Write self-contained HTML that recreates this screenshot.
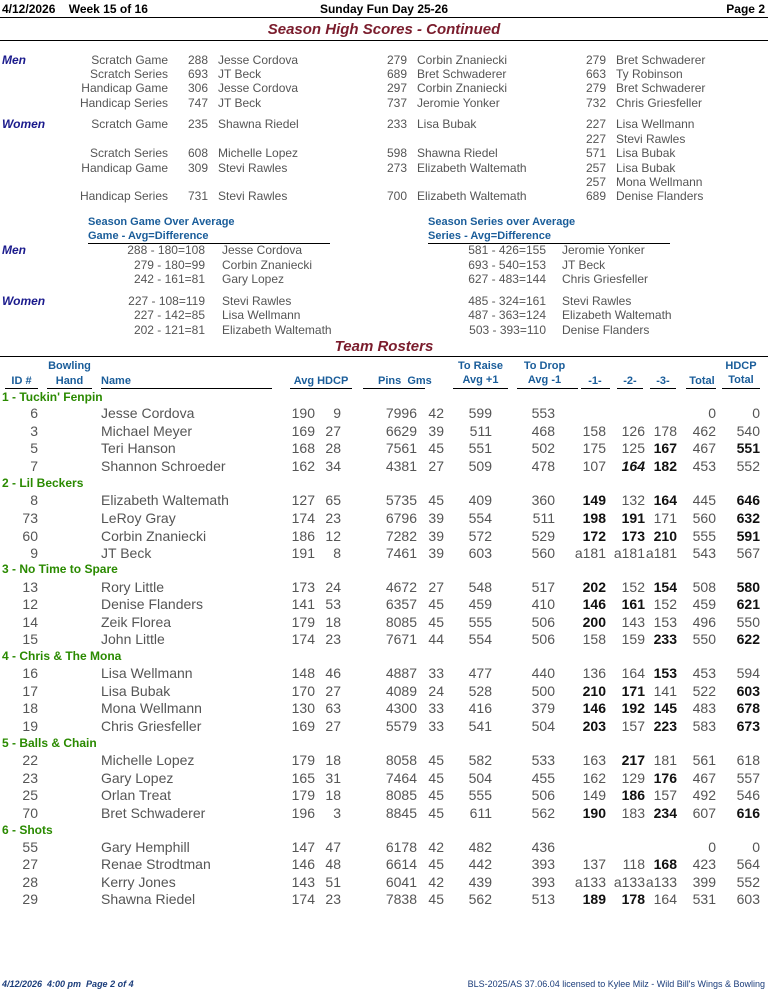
<!DOCTYPE html>
<html><head><meta charset="utf-8"><style>
body{margin:0;width:768px;height:991px;position:relative;background:#fff;font-family:"Liberation Sans",sans-serif;color:#555;overflow:hidden}
div,span,b{position:absolute;white-space:nowrap}
.hl{left:0;width:768px;height:0;border-top:1.5px solid #000}
.ttl{left:0;width:768px;text-align:center;color:#7a1c2c;font-weight:bold;font-style:italic;font-size:15px}
.s{font-size:12px;line-height:14px;width:768px;left:0}
.lb{color:#1a1a8c;font-weight:bold;font-style:italic;left:2px}
.bh{color:#1a5d9a;font-weight:bold;font-size:11px;line-height:14px}
.r{left:0;width:768px;font-size:14px;line-height:18px}
.tm{left:2px;color:#2a8a00;font-weight:bold;font-size:12px;line-height:16px}
b{font-weight:bold;color:#111}
.i{right:730px}.n{left:101px}.a{right:453px}.h{right:427px}.p{right:351px}.g{right:324px}.tr{right:276px}.td{right:213px}.g1{right:162px}.g2{right:123px}.g3{right:91px}.t{right:52px}.ht{right:8px}
.ul{border-top:1.5px solid #000;height:0}
</style></head><body>
<div style="left:2px;top:2px;font-size:12px;font-weight:bold;color:#000">4/12/2026&nbsp;&nbsp;&nbsp; Week 15 of 16</div>
<div style="left:0;width:768px;text-align:center;top:2px;font-size:12px;font-weight:bold;color:#000">Sunday Fun Day 25-26</div>
<div style="right:3px;top:2px;font-size:12px;font-weight:bold;color:#000">Page 2</div>
<div class="hl" style="top:17px"></div>
<div class="ttl" style="top:21px">Season High Scores - Continued</div>
<div class="hl" style="top:40px"></div>

<div class="s" style="top:53px"><span class="lb">Men</span><span style="right:600px">Scratch Game</span><span style="left:188px">288</span><span style="left:218px">Jesse Cordova</span><span style="left:387px">279</span><span style="left:417px">Corbin Znaniecki</span><span style="left:586px">279</span><span style="left:616px">Bret Schwaderer</span></div>
<div class="s" style="top:67px"><span style="right:600px">Scratch Series</span><span style="left:188px">693</span><span style="left:218px">JT Beck</span><span style="left:387px">689</span><span style="left:417px">Bret Schwaderer</span><span style="left:586px">663</span><span style="left:616px">Ty Robinson</span></div>
<div class="s" style="top:81px"><span style="right:600px">Handicap Game</span><span style="left:188px">306</span><span style="left:218px">Jesse Cordova</span><span style="left:387px">297</span><span style="left:417px">Corbin Znaniecki</span><span style="left:586px">279</span><span style="left:616px">Bret Schwaderer</span></div>
<div class="s" style="top:96px"><span style="right:600px">Handicap Series</span><span style="left:188px">747</span><span style="left:218px">JT Beck</span><span style="left:387px">737</span><span style="left:417px">Jeromie Yonker</span><span style="left:586px">732</span><span style="left:616px">Chris Griesfeller</span></div>
<div class="s" style="top:117px"><span class="lb">Women</span><span style="right:600px">Scratch Game</span><span style="left:188px">235</span><span style="left:218px">Shawna Riedel</span><span style="left:387px">233</span><span style="left:417px">Lisa Bubak</span><span style="left:586px">227</span><span style="left:616px">Lisa Wellmann</span></div>
<div class="s" style="top:132px"><span style="left:586px">227</span><span style="left:616px">Stevi Rawles</span></div>
<div class="s" style="top:146px"><span style="right:600px">Scratch Series</span><span style="left:188px">608</span><span style="left:218px">Michelle Lopez</span><span style="left:387px">598</span><span style="left:417px">Shawna Riedel</span><span style="left:586px">571</span><span style="left:616px">Lisa Bubak</span></div>
<div class="s" style="top:161px"><span style="right:600px">Handicap Game</span><span style="left:188px">309</span><span style="left:218px">Stevi Rawles</span><span style="left:387px">273</span><span style="left:417px">Elizabeth Waltemath</span><span style="left:586px">257</span><span style="left:616px">Lisa Bubak</span></div>
<div class="s" style="top:175px"><span style="left:586px">257</span><span style="left:616px">Mona Wellmann</span></div>
<div class="s" style="top:189px"><span style="right:600px">Handicap Series</span><span style="left:188px">731</span><span style="left:218px">Stevi Rawles</span><span style="left:387px">700</span><span style="left:417px">Elizabeth Waltemath</span><span style="left:586px">689</span><span style="left:616px">Denise Flanders</span></div>

<div class="bh" style="left:88px;top:215px">Season Game Over Average<br>Game - Avg=Difference</div>
<div class="ul" style="left:88px;top:243px;width:242px"></div>
<div class="bh" style="left:428px;top:215px">Season Series over Average<br>Series - Avg=Difference</div>
<div class="ul" style="left:428px;top:243px;width:242px"></div>
<div class="s" style="top:243px"><span class="lb">Men</span><span style="right:563px">288 - 180=108</span><span style="left:222px">Jesse Cordova</span><span style="right:222px">581 - 426=155</span><span style="left:562px">Jeromie Yonker</span></div>
<div class="s" style="top:258px"><span style="right:563px">279 - 180=99</span><span style="left:222px">Corbin Znaniecki</span><span style="right:222px">693 - 540=153</span><span style="left:562px">JT Beck</span></div>
<div class="s" style="top:272px"><span style="right:563px">242 - 161=81</span><span style="left:222px">Gary Lopez</span><span style="right:222px">627 - 483=144</span><span style="left:562px">Chris Griesfeller</span></div>
<div class="s" style="top:294px"><span class="lb">Women</span><span style="right:563px">227 - 108=119</span><span style="left:222px">Stevi Rawles</span><span style="right:222px">485 - 324=161</span><span style="left:562px">Stevi Rawles</span></div>
<div class="s" style="top:308px"><span style="right:563px">227 - 142=85</span><span style="left:222px">Lisa Wellmann</span><span style="right:222px">487 - 363=124</span><span style="left:562px">Elizabeth Waltemath</span></div>
<div class="s" style="top:323px"><span style="right:563px">202 - 121=81</span><span style="left:222px">Elizabeth Waltemath</span><span style="right:222px">503 - 393=110</span><span style="left:562px">Denise Flanders</span></div>

<div class="ttl" style="top:338px">Team Rosters</div>
<div class="hl" style="top:356px"></div>
<div class="bh" style="left:47px;width:45px;text-align:center;top:359px">Bowling</div>
<div class="bh" style="left:5px;width:33px;text-align:center;top:374px">ID #</div>
<div class="bh" style="left:47px;width:45px;text-align:center;top:374px">Hand</div>
<div class="bh" style="left:101px;top:374px">Name</div>
<div class="bh" style="left:290px;width:62px;text-align:center;top:374px">Avg HDCP</div>
<div class="bh" style="left:378px;top:374px">Pins&nbsp; Gms</div>
<div class="bh" style="left:453px;width:55px;text-align:center;top:359px">To Raise<br>Avg +1</div>
<div class="bh" style="left:517px;width:55px;text-align:center;top:359px">To Drop<br>Avg -1</div>
<div class="bh" style="left:580px;width:30px;text-align:center;top:374px">-1-</div>
<div class="bh" style="left:617px;width:26px;text-align:center;top:374px">-2-</div>
<div class="bh" style="left:650px;width:26px;text-align:center;top:374px">-3-</div>
<div class="bh" style="left:686px;width:32px;text-align:center;top:374px">Total</div>
<div class="bh" style="left:722px;width:38px;text-align:center;top:359px">HDCP<br>Total</div>
<div class="ul" style="left:5px;top:388px;width:33px"></div>
<div class="ul" style="left:47px;top:388px;width:45px"></div>
<div class="ul" style="left:101px;top:388px;width:171px"></div>
<div class="ul" style="left:290px;top:388px;width:62px"></div>
<div class="ul" style="left:363px;top:388px;width:62px"></div>
<div class="ul" style="left:453px;top:388px;width:55px"></div>
<div class="ul" style="left:517px;top:388px;width:61px"></div>
<div class="ul" style="left:581px;top:388px;width:29px"></div>
<div class="ul" style="left:617px;top:388px;width:26px"></div>
<div class="ul" style="left:650px;top:388px;width:26px"></div>
<div class="ul" style="left:686px;top:388px;width:30px"></div>
<div class="ul" style="left:722px;top:388px;width:38px"></div>

<div class="tm" style="top:389px">1 - Tuckin' Fenpin</div>
<div class="r" style="top:404px"><span class="i">6</span><span class="n">Jesse Cordova</span><span class="a">190</span><span class="h">9</span><span class="p">7996</span><span class="g">42</span><span class="tr">599</span><span class="td">553</span><span class="t">0</span><span class="ht">0</span></div>
<div class="r" style="top:422px"><span class="i">3</span><span class="n">Michael Meyer</span><span class="a">169</span><span class="h">27</span><span class="p">6629</span><span class="g">39</span><span class="tr">511</span><span class="td">468</span><span class="g1">158</span><span class="g2">126</span><span class="g3">178</span><span class="t">462</span><span class="ht">540</span></div>
<div class="r" style="top:439px"><span class="i">5</span><span class="n">Teri Hanson</span><span class="a">168</span><span class="h">28</span><span class="p">7561</span><span class="g">45</span><span class="tr">551</span><span class="td">502</span><span class="g1">175</span><span class="g2">125</span><b class="g3">167</b><span class="t">467</span><b class="ht">551</b></div>
<div class="r" style="top:457px"><span class="i">7</span><span class="n">Shannon Schroeder</span><span class="a">162</span><span class="h">34</span><span class="p">4381</span><span class="g">27</span><span class="tr">509</span><span class="td">478</span><span class="g1">107</span><b class="g2"><i>164</i></b><b class="g3">182</b><span class="t">453</span><span class="ht">552</span></div>

<div class="tm" style="top:475px">2 - Lil Beckers</div>
<div class="r" style="top:491px"><span class="i">8</span><span class="n">Elizabeth Waltemath</span><span class="a">127</span><span class="h">65</span><span class="p">5735</span><span class="g">45</span><span class="tr">409</span><span class="td">360</span><b class="g1">149</b><span class="g2">132</span><b class="g3">164</b><span class="t">445</span><b class="ht">646</b></div>
<div class="r" style="top:509px"><span class="i">73</span><span class="n">LeRoy Gray</span><span class="a">174</span><span class="h">23</span><span class="p">6796</span><span class="g">39</span><span class="tr">554</span><span class="td">511</span><b class="g1">198</b><b class="g2">191</b><span class="g3">171</span><span class="t">560</span><b class="ht">632</b></div>
<div class="r" style="top:527px"><span class="i">60</span><span class="n">Corbin Znaniecki</span><span class="a">186</span><span class="h">12</span><span class="p">7282</span><span class="g">39</span><span class="tr">572</span><span class="td">529</span><b class="g1">172</b><b class="g2">173</b><b class="g3">210</b><span class="t">555</span><b class="ht">591</b></div>
<div class="r" style="top:544px"><span class="i">9</span><span class="n">JT Beck</span><span class="a">191</span><span class="h">8</span><span class="p">7461</span><span class="g">39</span><span class="tr">603</span><span class="td">560</span><span class="g1">a181</span><span class="g2">a181</span><span class="g3">a181</span><span class="t">543</span><span class="ht">567</span></div>

<div class="tm" style="top:561px">3 - No Time to Spare</div>
<div class="r" style="top:578px"><span class="i">13</span><span class="n">Rory Little</span><span class="a">173</span><span class="h">24</span><span class="p">4672</span><span class="g">27</span><span class="tr">548</span><span class="td">517</span><b class="g1">202</b><span class="g2">152</span><b class="g3">154</b><span class="t">508</span><b class="ht">580</b></div>
<div class="r" style="top:595px"><span class="i">12</span><span class="n">Denise Flanders</span><span class="a">141</span><span class="h">53</span><span class="p">6357</span><span class="g">45</span><span class="tr">459</span><span class="td">410</span><b class="g1">146</b><b class="g2">161</b><span class="g3">152</span><span class="t">459</span><b class="ht">621</b></div>
<div class="r" style="top:613px"><span class="i">14</span><span class="n">Zeik Florea</span><span class="a">179</span><span class="h">18</span><span class="p">8085</span><span class="g">45</span><span class="tr">555</span><span class="td">506</span><b class="g1">200</b><span class="g2">143</span><span class="g3">153</span><span class="t">496</span><span class="ht">550</span></div>
<div class="r" style="top:630px"><span class="i">15</span><span class="n">John Little</span><span class="a">174</span><span class="h">23</span><span class="p">7671</span><span class="g">44</span><span class="tr">554</span><span class="td">506</span><span class="g1">158</span><span class="g2">159</span><b class="g3">233</b><span class="t">550</span><b class="ht">622</b></div>

<div class="tm" style="top:648px">4 - Chris &amp; The Mona</div>
<div class="r" style="top:664px"><span class="i">16</span><span class="n">Lisa Wellmann</span><span class="a">148</span><span class="h">46</span><span class="p">4887</span><span class="g">33</span><span class="tr">477</span><span class="td">440</span><span class="g1">136</span><span class="g2">164</span><b class="g3">153</b><span class="t">453</span><span class="ht">594</span></div>
<div class="r" style="top:682px"><span class="i">17</span><span class="n">Lisa Bubak</span><span class="a">170</span><span class="h">27</span><span class="p">4089</span><span class="g">24</span><span class="tr">528</span><span class="td">500</span><b class="g1">210</b><b class="g2">171</b><span class="g3">141</span><span class="t">522</span><b class="ht">603</b></div>
<div class="r" style="top:699px"><span class="i">18</span><span class="n">Mona Wellmann</span><span class="a">130</span><span class="h">63</span><span class="p">4300</span><span class="g">33</span><span class="tr">416</span><span class="td">379</span><b class="g1">146</b><b class="g2">192</b><b class="g3">145</b><span class="t">483</span><b class="ht">678</b></div>
<div class="r" style="top:717px"><span class="i">19</span><span class="n">Chris Griesfeller</span><span class="a">169</span><span class="h">27</span><span class="p">5579</span><span class="g">33</span><span class="tr">541</span><span class="td">504</span><b class="g1">203</b><span class="g2">157</span><b class="g3">223</b><span class="t">583</span><b class="ht">673</b></div>

<div class="tm" style="top:735px">5 - Balls &amp; Chain</div>
<div class="r" style="top:751px"><span class="i">22</span><span class="n">Michelle Lopez</span><span class="a">179</span><span class="h">18</span><span class="p">8058</span><span class="g">45</span><span class="tr">582</span><span class="td">533</span><span class="g1">163</span><b class="g2">217</b><span class="g3">181</span><span class="t">561</span><span class="ht">618</span></div>
<div class="r" style="top:769px"><span class="i">23</span><span class="n">Gary Lopez</span><span class="a">165</span><span class="h">31</span><span class="p">7464</span><span class="g">45</span><span class="tr">504</span><span class="td">455</span><span class="g1">162</span><span class="g2">129</span><b class="g3">176</b><span class="t">467</span><span class="ht">557</span></div>
<div class="r" style="top:786px"><span class="i">25</span><span class="n">Orlan Treat</span><span class="a">179</span><span class="h">18</span><span class="p">8085</span><span class="g">45</span><span class="tr">555</span><span class="td">506</span><span class="g1">149</span><b class="g2">186</b><span class="g3">157</span><span class="t">492</span><span class="ht">546</span></div>
<div class="r" style="top:804px"><span class="i">70</span><span class="n">Bret Schwaderer</span><span class="a">196</span><span class="h">3</span><span class="p">8845</span><span class="g">45</span><span class="tr">611</span><span class="td">562</span><b class="g1">190</b><span class="g2">183</span><b class="g3">234</b><span class="t">607</span><b class="ht">616</b></div>

<div class="tm" style="top:822px">6 - Shots</div>
<div class="r" style="top:838px"><span class="i">55</span><span class="n">Gary Hemphill</span><span class="a">147</span><span class="h">47</span><span class="p">6178</span><span class="g">42</span><span class="tr">482</span><span class="td">436</span><span class="t">0</span><span class="ht">0</span></div>
<div class="r" style="top:855px"><span class="i">27</span><span class="n">Renae Strodtman</span><span class="a">146</span><span class="h">48</span><span class="p">6614</span><span class="g">45</span><span class="tr">442</span><span class="td">393</span><span class="g1">137</span><span class="g2">118</span><b class="g3">168</b><span class="t">423</span><span class="ht">564</span></div>
<div class="r" style="top:873px"><span class="i">28</span><span class="n">Kerry Jones</span><span class="a">143</span><span class="h">51</span><span class="p">6041</span><span class="g">42</span><span class="tr">439</span><span class="td">393</span><span class="g1">a133</span><span class="g2">a133</span><span class="g3">a133</span><span class="t">399</span><span class="ht">552</span></div>
<div class="r" style="top:890px"><span class="i">29</span><span class="n">Shawna Riedel</span><span class="a">174</span><span class="h">23</span><span class="p">7838</span><span class="g">45</span><span class="tr">562</span><span class="td">513</span><b class="g1">189</b><b class="g2">178</b><span class="g3">164</span><span class="t">531</span><span class="ht">603</span></div>

<div style="left:2px;top:979px;font-size:9px;font-weight:bold;font-style:italic;color:#1a3c7a">4/12/2026&nbsp; 4:00 pm&nbsp; Page 2 of 4</div>
<div style="right:3px;top:979px;font-size:9px;color:#1a3c7a">BLS-2025/AS 37.06.04 licensed to Kylee Milz - Wild Bill's Wings &amp; Bowling</div>
</body></html>
